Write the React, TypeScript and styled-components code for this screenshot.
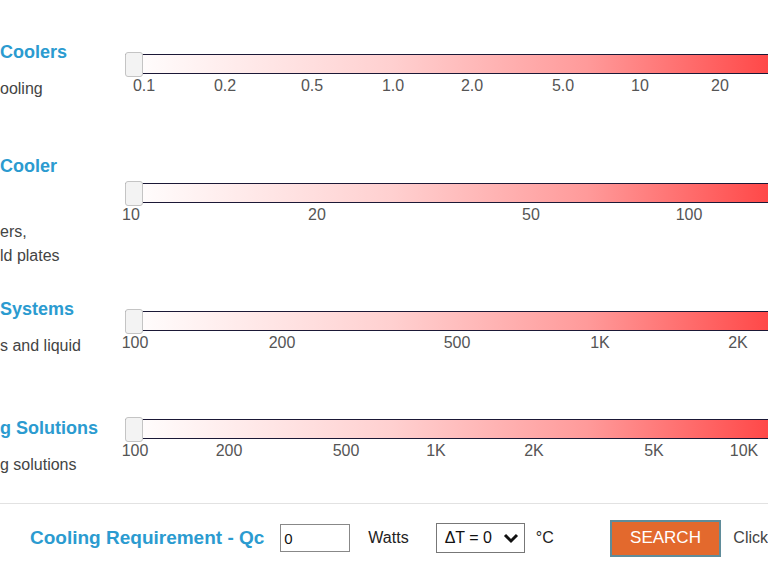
import styled, { createGlobalStyle } from 'styled-components'

interface Tick {
  label: string
  x: number
}

interface RangeRow {
  title: string
  lines: string[]
  height: number
  titleTop: number
  descGap: number
  trackTop: number
  ticks: Tick[]
}

const rows: RangeRow[] = [
  {
    title: 'Coolers',
    lines: ['ooling'],
    height: 120,
    titleTop: 11,
    descGap: 14,
    trackTop: 24,
    ticks: [
      { label: '0.1', x: 19 },
      { label: '0.2', x: 100 },
      { label: '0.5', x: 187 },
      { label: '1.0', x: 268 },
      { label: '2.0', x: 347 },
      { label: '5.0', x: 438 },
      { label: '10', x: 515 },
      { label: '20', x: 595 },
    ],
  },
  {
    title: 'Cooler',
    lines: ['ers,', 'ld plates'],
    height: 140,
    titleTop: 5,
    descGap: 43,
    trackTop: 33,
    ticks: [
      { label: '10', x: 6 },
      { label: '20', x: 192 },
      { label: '50', x: 406 },
      { label: '100', x: 564 },
    ],
  },
  {
    title: 'Systems',
    lines: ['s and liquid'],
    height: 115,
    titleTop: 8,
    descGap: 14,
    trackTop: 21,
    ticks: [
      { label: '100', x: 10 },
      { label: '200', x: 157 },
      { label: '500', x: 332 },
      { label: '1K', x: 475 },
      { label: '2K', x: 613 },
    ],
  },
  {
    title: 'g Solutions',
    lines: ['g solutions'],
    height: 98,
    titleTop: 12,
    descGap: 14,
    trackTop: 14,
    ticks: [
      { label: '100', x: 10 },
      { label: '200', x: 104 },
      { label: '500', x: 221 },
      { label: '1K', x: 311 },
      { label: '2K', x: 409 },
      { label: '5K', x: 529 },
      { label: '10K', x: 619 },
    ],
  },
]

export default function App() {
  return (
    <>
      <GlobalStyle />
      <Page>
        {rows.map((row) => (
          <Row key={row.title} $height={row.height}>
            <Info $top={row.titleTop}>
              <Title $gap={row.descGap}>{row.title}</Title>
              {row.lines.map((line) => (
                <Desc key={line}>{line}</Desc>
              ))}
            </Info>
            <SliderArea $top={row.trackTop}>
              <Track>
                <Handle />
              </Track>
              <Scale>
                {row.ticks.map((t) => (
                  <TickLabel key={t.label} style={{ left: t.x }}>
                    {t.label}
                  </TickLabel>
                ))}
              </Scale>
            </SliderArea>
          </Row>
        ))}
        <Divider />
        <SearchBar>
          <SearchLabel>Cooling Requirement - Qc</SearchLabel>
          <ValueInput defaultValue="0" />
          <Unit $after={27}>Watts</Unit>
          <SelectBox>
            <span>ΔT = 0</span>
            <svg width="16" height="12" viewBox="0 0 16 12">
              <path d="M2 3 L8 9 L14 3" fill="none" stroke="#111" strokeWidth="3" />
            </svg>
          </SelectBox>
          <Unit $gap={11} $after={0}>°C</Unit>
          <SearchButton>SEARCH</SearchButton>
          <Hint>Click</Hint>
        </SearchBar>
      </Page>
    </>
  )
}

const GlobalStyle = createGlobalStyle`
  html, body {
    margin: 0;
    padding: 0;
    background: #fff;
    overflow: hidden;
  }
  body {
    font-family: "Liberation Sans", Arial, sans-serif;
  }
`

const Page = styled.div`
  width: 768px;
  height: 576px;
  overflow: hidden;
  padding-top: 30px;
  box-sizing: border-box;
`

const Row = styled.div<{ $height: number }>`
  display: grid;
  grid-template-columns: 125px 1fr;
  height: ${({ $height }) => $height}px;
`

const Info = styled.div<{ $top: number }>`
  padding-top: ${({ $top }) => $top}px;
  overflow: hidden;
  white-space: nowrap;
`

const Title = styled.div<{ $gap: number }>`
  color: #2b9bd0;
  font-size: 18px;
  font-weight: 700;
  line-height: 22px;
  margin-bottom: ${({ $gap }) => $gap}px;
`

const Desc = styled.div`
  color: #444;
  font-size: 16px;
  line-height: 24px;
`

const SliderArea = styled.div<{ $top: number }>`
  padding-top: ${({ $top }) => $top}px;
`

const Track = styled.div`
  position: relative;
  height: 18px;
  width: 700px;
  border-top: 1px solid #1b1836;
  border-bottom: 1px solid #1b1836;
  background: linear-gradient(to right, #fff 0%, #ffd0d0 38%, #ff9a9a 66%, #ff4848 92%, #ff3a3a 100%);
`

const Handle = styled.div`
  position: absolute;
  left: 0;
  top: -3px;
  width: 18px;
  height: 25px;
  background: #f3f3f3;
  border: 1px solid #c4c4c4;
  border-radius: 3px;
  box-sizing: border-box;
`

const Scale = styled.div`
  position: relative;
  height: 22px;
`

const TickLabel = styled.span`
  position: absolute;
  top: 3px;
  transform: translateX(-50%);
  color: #555;
  font-size: 16px;
  line-height: 18px;
  white-space: nowrap;
`

const Divider = styled.div`
  height: 1px;
  background: #e2e2e2;
`

const SearchBar = styled.div`
  display: flex;
  align-items: center;
  height: 68px;
  padding-left: 30px;
  white-space: nowrap;
`

const SearchLabel = styled.span`
  color: #2b9bd0;
  font-size: 19px;
  font-weight: 700;
  margin-right: 16px;
`

const ValueInput = styled.input`
  width: 70px;
  height: 28px;
  box-sizing: border-box;
  border: 1px solid #888;
  padding: 0 3px;
  font-family: "Liberation Sans", Arial, sans-serif;
  font-size: 15px;
  color: #111;
  outline: none;
`

const Unit = styled.span<{ $gap?: number; $after: number }>`
  color: #222;
  font-size: 16px;
  margin-left: ${({ $gap }) => $gap ?? 18}px;
  margin-right: ${({ $after }) => $after}px;
`

const SelectBox = styled.div`
  display: flex;
  align-items: center;
  justify-content: space-between;
  width: 94px;
  height: 30px;
  box-sizing: border-box;
  border: 1px solid #777;
  padding: 0 5px 0 8px;
  font-size: 16px;
  color: #111;
`

const SearchButton = styled.button`
  width: 118px;
  height: 37px;
  margin-left: 56px;
  box-sizing: border-box;
  background: #e3692d;
  border: 2px solid #5f8c9a;
  color: #fff;
  font-family: "Liberation Sans", Arial, sans-serif;
  font-size: 17px;
`

const Hint = styled.span`
  margin-left: 12px;
  color: #444;
  font-size: 16px;
`
